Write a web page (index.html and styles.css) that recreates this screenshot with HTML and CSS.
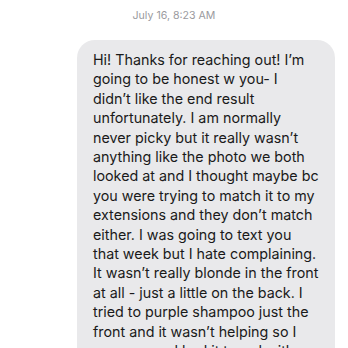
FILE: index.html
```html
<!DOCTYPE html>
<html>
<head>
<meta charset="utf-8">
<link rel="stylesheet" href="styles.css">
</head>
<body>
<div class="thread">
  <div class="stamp">July 16, 8:23 AM</div>
  <div class="row">
    <div class="bubble">Hi! Thanks for reaching out! I’m<br>going to be honest w you- I<br>didn’t like the end result<br>unfortunately. I am normally<br>never picky but it really wasn’t<br>anything like the photo we both<br>looked at and I thought maybe bc<br>you were trying to match it to my<br>extensions and they don’t match<br>either. I was going to text you<br>that week but I hate complaining.<br>It wasn’t really blonde in the front<br>at all - just a little on the back. I<br>tried to purple shampoo just the<br>front and it wasn’t helping so I<br>ran over and had it toned with</div>
  </div>
</div>
</body>
</html>
```
FILE: styles.css
```css
html, body {
  margin: 0;
  padding: 0;
  background: #ffffff;
}
.thread {
  width: 348px;
  height: 348px;
  overflow: hidden;
  font-family: Inter, "Noto Sans", sans-serif;
}
.stamp {
  padding-top: 9px;
  text-align: center;
  font-size: 10.6px;
  line-height: 13px;
  color: #9a9a9e;
}
.row {
  display: flex;
  padding: 18px 13px 0 77px;
}
.bubble {
  flex: 1;
  background: #e9e9eb;
  border-radius: 18px;
  padding: 10px 12px 10px 16px;
  font-size: 14.3px;
  line-height: 19.4px;
  color: #1a1a1a;
  white-space: nowrap;
}
```
